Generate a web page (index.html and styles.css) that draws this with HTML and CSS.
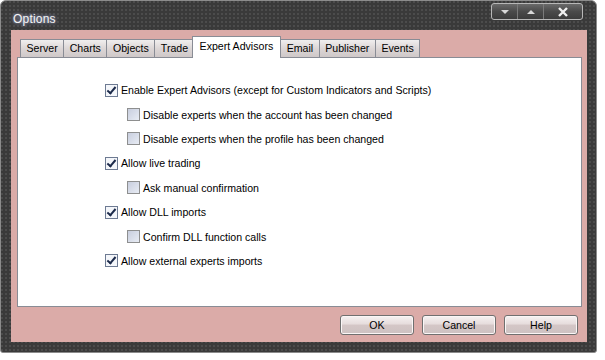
FILE: index.html
```html
<!DOCTYPE html>
<html lang="en">
<head>
  <meta charset="UTF-8">
  <title>Options</title>
  <link rel="stylesheet" href="styles.css">
</head>
<body>

<div class="window">
  <div class="titlebar">
    <span class="title">Options</span>
    <div class="caption-buttons">
      <span class="cap-btn">
        <svg width="10" height="6" viewBox="0 0 10 6"><path d="M1 1h8L5 5z" fill="#d8d8d8"/></svg>
      </span>
      <span class="cap-btn">
        <svg width="10" height="6" viewBox="0 0 10 6"><path d="M1 5h8L5 1z" fill="#d8d8d8"/></svg>
      </span>
      <span class="cap-btn close">
        <svg width="12" height="10" viewBox="0 0 12 10"><path d="M2 1l8 8M10 1L2 9" stroke="#f0f0f0" stroke-width="2.4"/></svg>
      </span>
    </div>
  </div>

  <div class="client">
    <div class="tabs">
      <span class="tab">Server</span>
      <span class="tab">Charts</span>
      <span class="tab">Objects</span>
      <span class="tab">Trade</span>
      <span class="tab active">Expert Advisors</span>
      <span class="tab">Email</span>
      <span class="tab">Publisher</span>
      <span class="tab">Events</span>
    </div>

    <div class="panel">
      <label class="opt"><span class="box checked"></span>Enable Expert Advisors (except for Custom Indicators and Scripts)</label>
      <label class="opt sub"><span class="box"></span>Disable experts when the account has been changed</label>
      <label class="opt sub"><span class="box"></span>Disable experts when the profile has been changed</label>
      <label class="opt"><span class="box checked"></span>Allow live trading</label>
      <label class="opt sub"><span class="box"></span>Ask manual confirmation</label>
      <label class="opt"><span class="box checked"></span>Allow DLL imports</label>
      <label class="opt sub"><span class="box"></span>Confirm DLL function calls</label>
      <label class="opt"><span class="box checked"></span>Allow external experts imports</label>
    </div>

    <div class="actions">
      <button class="btn">OK</button>
      <button class="btn">Cancel</button>
      <button class="btn">Help</button>
    </div>
  </div>
</div>

</body>
</html>
```

FILE: styles.css
```css
body {
  margin: 0;
  background: #fff;
  font-family: "Liberation Sans", Arial, sans-serif;
  font-size: 10.6px;
  color: #000;
}

.window {
  width: 597px;
  height: 353px;
  box-sizing: border-box;
  background-color: #3a3a3a;
  background-image: radial-gradient(circle at 1px 1px, #4c4c4c 1px, transparent 0);
  background-size: 4px 4px;
  border: 1px solid #8c8c8c;
  border-radius: 6px 6px 3px 3px;
  padding: 0 9px 10px 10px;
  display: flex;
  flex-direction: column;
}

/* Title bar */
.titlebar {
  height: 29px;
  display: flex;
  justify-content: space-between;
}
.title {
  font-size: 12px;
  color: #f4f4f4;
  text-shadow: 0 0 3px #9aa0c0, 0 0 5px #6a7090;
  margin: 11px 0 0 2px;
  letter-spacing: 0.2px;
}
.caption-buttons {
  display: flex;
  margin: 2px 4px 0 0;
  height: 15px;
  border: 1px solid #b8b8b8;
  border-radius: 3px;
  background: linear-gradient(#6a6a6a, #4a4a4a 50%, #3c3c3c);
}
.cap-btn {
  width: 25px;
  display: flex;
  align-items: center;
  justify-content: center;
  border-right: 1px solid #7a7a7a;
}
.cap-btn.close {
  width: 38px;
  border-right: none;
}

/* Client area */
.client {
  flex: 1;
  background-color: #dbaba8;
  background-image: radial-gradient(circle at 1px 1px, #dcc8a0 0.7px, transparent 0);
  background-size: 3px 3px;
  padding: 6px 5px 0 6px;
  display: flex;
  flex-direction: column;
}

.tabs {
  display: flex;
  align-items: flex-end;
  height: 21px;
  padding-left: 3px;
  position: relative;
  z-index: 1;
}
.tab {
  height: 17px;
  line-height: 17px;
  padding: 0 5.5px;
  background: linear-gradient(#f0eeee, #dcd6d6 50%, #cfc8c8);
  border: 1px solid #898c95;
  border-bottom: none;
  margin-right: -1px;
}
.tab.active {
  height: 21px;
  line-height: 19px;
  margin: 0 -1px -1px -2px;
  padding: 0 7px;
  background: #fff;
  position: relative;
}

.panel {
  height: 250px;
  box-sizing: border-box;
  background-color: #fff;
  background-image: radial-gradient(circle at 1px 1px, #d8d8d8 0.7px, transparent 0);
  background-size: 3px 3px;
  border: 1px solid #898c95;
  padding: 20px 0 0 87px;
}

.opt {
  height: 24.4px;
  display: flex;
  align-items: center;
  white-space: nowrap;
}
.opt.sub {
  padding-left: 22px;
}
.box {
  width: 11px;
  height: 11px;
  border: 1px solid #8e8f8f;
  background: linear-gradient(135deg, #c8cede, #e8ecf4);
  margin-right: 3px;
  flex-shrink: 0;
  position: relative;
}
.box.checked {
  background: #f4f6fa;
  border-color: #6d7a92;
}
.box.checked::after {
  content: "";
  position: absolute;
  left: 3px;
  top: 0;
  width: 3px;
  height: 7px;
  border: solid #1c2a4a;
  border-width: 0 2px 2px 0;
  transform: rotate(40deg);
}

/* Bottom buttons */
.actions {
  display: flex;
  justify-content: flex-end;
  gap: 8px;
  margin-top: 8px;
  padding-right: 4px;
}
.btn {
  width: 74px;
  height: 20px;
  font-family: inherit;
  font-size: 10.6px;
  color: #000;
  border: 1px solid #707070;
  border-radius: 3px;
  background: linear-gradient(#f6f2f2, #e6dcdc 45%, #d4c6c6 50%, #cdc2c2);
  box-shadow: inset 0 0 0 1px #fbf6f6;
  padding: 0;
}
```
